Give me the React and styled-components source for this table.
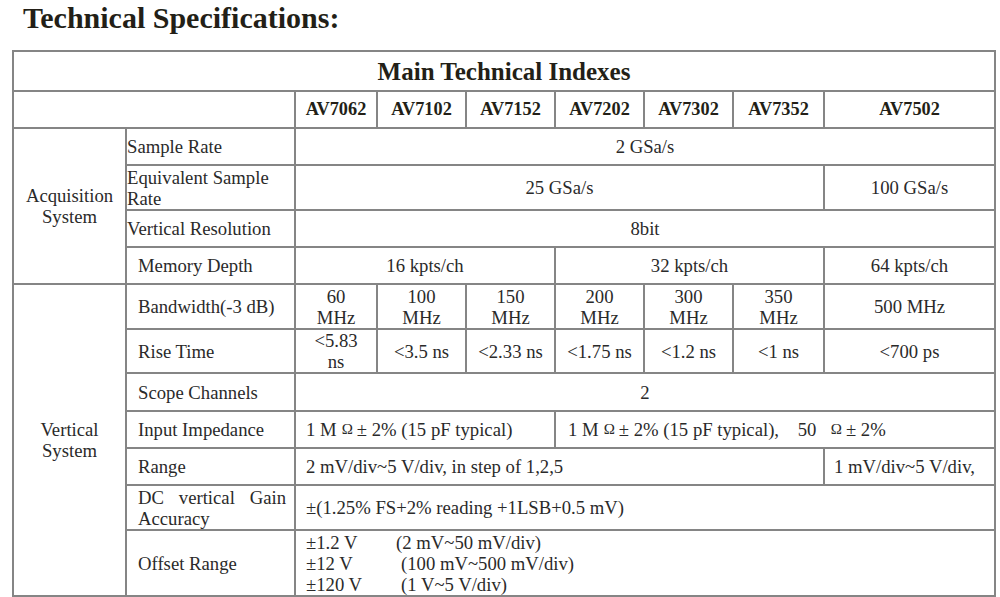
import React from "react";
import styled, { createGlobalStyle, css } from "styled-components";

const serif = css`
  font-family: "Liberation Serif", "Times New Roman", Times, serif;
`;

const GlobalStyle = createGlobalStyle`
  html, body {
    margin: 0;
    padding: 0;
    background: #ffffff;
  }
  body {
    ${serif}
    color: #2a2a2a;
  }
`;

const Page = styled.div`
  width: 1000px;
  height: 597px;
  overflow: hidden;
  padding: 0 6px 0 12px;
  box-sizing: border-box;
`;

const Heading = styled.h1`
  ${serif}
  margin: 0 0 14px 11px;
  font-size: 30px;
  line-height: 36px;
  font-weight: 700;
  color: #231f17;
`;

const Table = styled.table`
  ${serif}
  width: 982px;
  table-layout: fixed;
  border-collapse: collapse;
  font-size: 18.7px;
  line-height: 21px;
`;

const Row = styled.tr`
  height: ${(p) => p.$h || 37}px;
`;

const Caption = styled.th`
  ${serif}
  border: 2px solid #858585;
  font-size: 25px;
  font-weight: 700;
  color: #231f17;
  text-align: center;
  vertical-align: middle;
  padding: 0;
`;

const Model = styled.th`
  ${serif}
  border: 2px solid #858585;
  font-size: 18.3px;
  font-weight: 700;
  color: #231f17;
  text-align: center;
  vertical-align: middle;
  padding: 0;
`;

const Group = styled.td`
  border: 2px solid #858585;
  text-align: center;
  vertical-align: middle;
  padding: 0 4px;
`;

const Label = styled.td`
  border: 2px solid #858585;
  text-align: ${(p) => (p.$justify ? "justify" : "left")};
  text-align-last: left;
  vertical-align: middle;
  padding: 0 8px 0 ${(p) => (p.$flush ? 0 : 11)}px;
`;

const Value = styled.td`
  border: 2px solid #858585;
  text-align: ${(p) => (p.$left ? "left" : "center")};
  vertical-align: middle;
  padding: 0 ${(p) => (p.$left ? 4 : 10)}px 0 ${(p) => (p.$left ? p.$pad || 10 : 10)}px;
  white-space: ${(p) => (p.$nowrap ? "pre" : "normal")};
`;

const Ohm = styled.span`
  font-size: 15px;
  vertical-align: 2px;
  margin: 0 4px 0 5px;
`;

const OffsetList = styled.div`
  display: grid;
  grid-template-columns: 90px auto;
`;

const OffsetRange = styled.span`
  padding-left: ${(p) => p.$shift || 0}px;
`;

const offsets = [
  ["±1.2 V", "(2 mV~50 mV/div)", 0],
  ["±12 V", "(100 mV~500 mV/div)", 5],
  ["±120 V", "(1 V~5 V/div)", 5],
];

const models = ["AV7062", "AV7102", "AV7152", "AV7202", "AV7302", "AV7352", "AV7502"];
const bandwidths = ["60 MHz", "100 MHz", "150 MHz", "200 MHz", "300 MHz", "350 MHz", "500 MHz"];
const riseTimes = ["<5.83 ns", "<3.5 ns", "<2.33 ns", "<1.75 ns", "<1.2 ns", "<1 ns", "<700 ps"];
const widths = [113, 169, 82, 89, 89, 89, 89, 91, 171];

export default function App() {
  return (
    <Page>
      <GlobalStyle />
      <Heading>Technical Specifications:</Heading>
      <Table>
        <colgroup>
          {widths.map((w, i) => (
            <col key={i} style={{ width: w }} />
          ))}
        </colgroup>
        <tbody>
          <Row $h={40}>
            <Caption colSpan={9}>Main Technical Indexes</Caption>
          </Row>
          <Row>
            <Model colSpan={2}></Model>
            {models.map((m) => (
              <Model key={m}>{m}</Model>
            ))}
          </Row>

          <Row>
            <Group rowSpan={4}>Acquisition System</Group>
            <Label $flush>Sample Rate</Label>
            <Value colSpan={7}>2 GSa/s</Value>
          </Row>
          <Row $h={45}>
            <Label $flush>Equivalent Sample Rate</Label>
            <Value colSpan={6}>25 GSa/s</Value>
            <Value>100 GSa/s</Value>
          </Row>
          <Row>
            <Label $flush>Vertical Resolution</Label>
            <Value colSpan={7}>8bit</Value>
          </Row>
          <Row>
            <Label>Memory Depth</Label>
            <Value colSpan={3}>16 kpts/ch</Value>
            <Value colSpan={3}>32 kpts/ch</Value>
            <Value>64 kpts/ch</Value>
          </Row>

          <Row $h={45}>
            <Group rowSpan={7}>Vertical System</Group>
            <Label>Bandwidth(-3 dB)</Label>
            {bandwidths.map((b) => (
              <Value key={b}>{b}</Value>
            ))}
          </Row>
          <Row $h={44}>
            <Label>Rise Time</Label>
            {riseTimes.map((r) => (
              <Value key={r}>{r}</Value>
            ))}
          </Row>
          <Row $h={38}>
            <Label>Scope Channels</Label>
            <Value colSpan={7}>2</Value>
          </Row>
          <Row>
            <Label>Input Impedance</Label>
            <Value colSpan={3} $left>
              1 M<Ohm>Ω</Ohm>± 2% (15 pF typical)
            </Value>
            <Value colSpan={4} $left $pad={12} $nowrap>
              {"1 M"}
              <Ohm>Ω</Ohm>
              {"± 2% (15 pF typical),    50  "}
              <Ohm>Ω</Ohm>
              {"± 2%"}
            </Value>
          </Row>
          <Row>
            <Label>Range</Label>
            <Value colSpan={6} $left>
              2 mV/div~5 V/div, in step of 1,2,5
            </Value>
            <Value $left $pad={9}>
              1 mV/div~5 V/div,
            </Value>
          </Row>
          <Row $h={45}>
            <Label $justify>DC vertical Gain Accuracy</Label>
            <Value colSpan={7} $left>
              ±(1.25% FS+2% reading +1LSB+0.5 mV)
            </Value>
          </Row>
          <Row $h={66}>
            <Label>Offset Range</Label>
            <Value colSpan={7} $left>
              <OffsetList>
                {offsets.map(([v, r, s]) => (
                  <React.Fragment key={v}>
                    <span>{v}</span>
                    <OffsetRange $shift={s}>{r}</OffsetRange>
                  </React.Fragment>
                ))}
              </OffsetList>
            </Value>
          </Row>

          <Row $h={40}>
            <Group></Group>
            <Label></Label>
            <Value colSpan={7}></Value>
          </Row>
        </tbody>
      </Table>
    </Page>
  );
}
